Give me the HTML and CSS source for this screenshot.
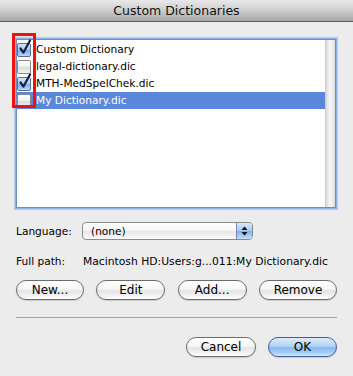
FILE: index.html
```html
<!DOCTYPE html>
<html>
<head>
<meta charset="utf-8">
<link rel="stylesheet" href="styles.css">
</head>
<body>
<div class="window">
  <div class="titlebar">Custom Dictionaries</div>
  <div class="content">
    <div class="list">
      <div class="rows">
        <div class="row">
          <span class="cb checked"><svg width="16" height="18" viewBox="0 0 16 18"><path d="M3.5 9.5 L6.5 13.5 L13 1.5" fill="none" stroke="#15213d" stroke-width="2.2" stroke-linecap="round" stroke-linejoin="round"/></svg></span>
          <span class="label">Custom Dictionary</span>
        </div>
        <div class="row">
          <span class="cb"></span>
          <span class="label">legal-dictionary.dic</span>
        </div>
        <div class="row">
          <span class="cb checked"><svg width="16" height="18" viewBox="0 0 16 18"><path d="M3.5 9.5 L6.5 13.5 L13 1.5" fill="none" stroke="#15213d" stroke-width="2.2" stroke-linecap="round" stroke-linejoin="round"/></svg></span>
          <span class="label">MTH-MedSpelChek.dic</span>
        </div>
        <div class="row selected">
          <span class="cb"></span>
          <span class="label">My Dictionary.dic</span>
        </div>
      </div>
      <div class="scrolltrack"></div>
    </div>

    <div class="field lang">
      <span class="flabel">Language:</span>
      <div class="popup">
        <span class="ptext">(none)</span>
        <span class="stepper"><svg width="7" height="10" viewBox="0 0 7 10"><path d="M3.5 0.5 L6.5 4 L0.5 4 Z" fill="#111"/><path d="M0.5 6 L6.5 6 L3.5 9.5 Z" fill="#111"/></svg></span>
      </div>
    </div>

    <div class="field path">
      <span class="flabel">Full path:</span>
      <span class="pvalue">Macintosh HD:Users:g...011:My Dictionary.dic</span>
    </div>

    <div class="buttons top">
      <button class="btn w-new">New...</button>
      <button class="btn w-edit">Edit</button>
      <button class="btn w-add">Add...</button>
      <button class="btn w-remove">Remove</button>
    </div>

    <div class="separator"></div>

    <div class="buttons bottom">
      <button class="btn w-cancel">Cancel</button>
      <button class="btn default w-ok">OK</button>
    </div>
  </div>
  <div class="annot"></div>
</div>
</body>
</html>
```
FILE: styles.css
```css
html, body {
  margin: 0;
  padding: 0;
}
body {
  width: 353px;
  height: 376px;
  overflow: hidden;
  background: #ececec;
  font-family: "DejaVu Sans", "Liberation Sans", sans-serif;
  color: #000;
}
.window {
  position: relative;
  width: 353px;
  height: 376px;
  background: #ececec;
}
.titlebar {
  height: 21px;
  border-bottom: 1px solid #5e5e5e;
  background: linear-gradient(#e9e9e9, #cfcfcf 45%, #a8a8a8);
  text-align: center;
  font-size: 12.5px;
  line-height: 21px;
  color: #111;
}
.content {
  padding: 0 16px;
}
.list {
  margin-top: 17px;
  height: 167px;
  display: flex;
  background: #fff;
  border: 1px solid #6f8fc4;
  box-shadow: 0 0 0 1px #8fb1e3, 0 0 1px 2px #b8cff0;
  margin-left: 0;
  margin-right: 1px;
}
.rows {
  flex: 1;
  padding-top: 1px;
}
.row {
  height: 17px;
  display: flex;
  align-items: center;
  font-size: 10.6px;
}
.row.selected {
  background: #5a87dc;
  color: #fff;
}
.cb {
  width: 12px;
  height: 12px;
  margin-left: 0;
  margin-right: 5px;
  border: 1px solid #8a8a8a;
  border-radius: 2px;
  background: linear-gradient(#ffffff, #f0f0f0 50%, #dcdcdc 51%, #f2f2f2);
  position: relative;
  flex: none;
}
.cb.checked {
  border-color: #54709c;
  background: linear-gradient(#d4e6fa, #a8c9ef 50%, #7eacea 51%, #b8d7f8);
}
.cb svg {
  position: absolute;
  left: -1px;
  top: -5px;
}
.label {
  white-space: nowrap;
  line-height: 17px;
}
.scrolltrack {
  width: 10px;
  flex: none;
  background: linear-gradient(to right, #c9c9c9, #ececec 30%, #f7f7f7 60%, #dcdcdc);
}
.field {
  display: flex;
  align-items: center;
  font-size: 10.6px;
  height: 18px;
}
.lang {
  margin-top: 14px;
}
.flabel {
  width: 66px;
  flex: none;
}
.popup {
  width: 169px;
  height: 16px;
  border: 1px solid #8b8b8b;
  border-radius: 4px;
  display: flex;
  align-items: center;
  background: linear-gradient(#ffffff, #f4f4f4 50%, #e6e6e6 51%, #fbfbfb);
  overflow: hidden;
}
.ptext {
  flex: 1;
  padding-left: 8px;
}
.stepper {
  width: 15px;
  height: 16px;
  border-left: 1px solid #6f8cb8;
  background: linear-gradient(#d6e7fb, #a7caf1 50%, #7fb0ee 51%, #c3def9);
  display: flex;
  align-items: center;
  justify-content: center;
}
.path {
  margin-top: 12px;
}
.pvalue {
  white-space: nowrap;
  margin-left: 1px;
  font-size: 10.75px;
}
.buttons {
  display: flex;
  align-items: center;
}
.buttons.top {
  margin-top: 10px;
  justify-content: space-between;
}
.buttons.bottom {
  margin-top: 19px;
  justify-content: flex-end;
  gap: 12px;
}
.btn {
  height: 20px;
  padding: 0;
  border: 1px solid #6c6c6c;
  border-radius: 10px;
  background: linear-gradient(#ffffff, #f6f6f6 45%, #e4e4e4 55%, #f4f4f4 85%, #ffffff);
  box-shadow: 0 1px 1px rgba(0,0,0,0.15);
  font-family: "DejaVu Sans", "Liberation Sans", sans-serif;
  font-size: 12px;
  color: #000;
  line-height: 18px;
  text-align: center;
}
.btn.default {
  border-color: #3f5f98;
  background: linear-gradient(#dbeafc, #b4d3f6 45%, #86b8f1 55%, #a9d2fb 85%, #d8ecff);
}
.w-new { width: 68px; }
.w-edit { width: 69px; }
.w-add { width: 69px; }
.w-remove { width: 78px; }
.w-cancel { width: 70px; }
.w-ok { width: 69px; }
.separator {
  margin-top: 17px;
  height: 0;
  border-top: 1px solid #a3a3a3;
}
.annot {
  position: absolute;
  left: 12px;
  top: 33px;
  width: 18px;
  height: 69px;
  border: 3px solid #ee1111;
}
```
